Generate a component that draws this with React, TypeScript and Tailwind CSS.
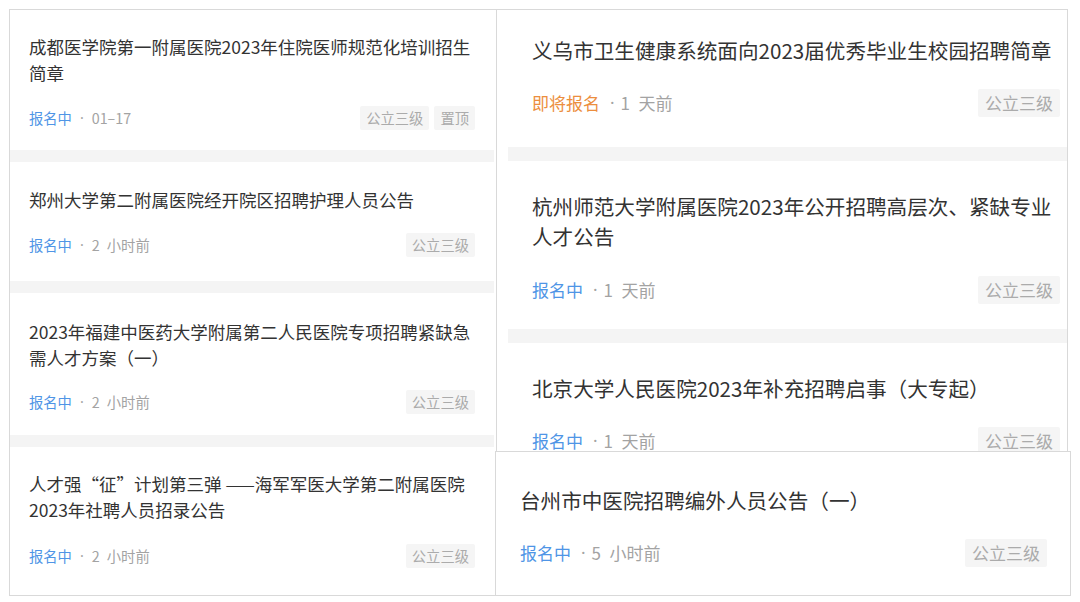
import React from "react";

type Size = "sm" | "lg";

interface CardProps {
  lines: string[];
  status: string;
  orange?: boolean;
  time: string;
  tags: string[];
  size: Size;
  pad: string;
  gap: string;
}

const FONT = { fontFamily: '"Noto Sans CJK SC", "Noto Sans", sans-serif' };

function Card({ lines, status, orange, time, tags, size, pad, gap }: CardProps) {
  const lg = size === "lg";
  return (
    <div className={pad}>
      <div className={lg ? "text-[20.6px] leading-[30px] text-[#333333]" : "text-[17.5px] leading-[26px] text-[#333333]"}>
        {lines.map((l, i) => (
          <div key={i} className="whitespace-nowrap">
            {l}
          </div>
        ))}
      </div>
      <div className={`${gap} flex items-center justify-between ${lg ? "h-[28px]" : "h-[24px]"}`}>
        <div className={`flex items-center whitespace-nowrap ${lg ? "text-[17px]" : "text-[14.3px]"}`}>
          <span className={orange ? "text-[#ec8e3e]" : "text-[#4f95e6]"}>{status}</span>
          <span
            className={
              lg
                ? "ml-[10px] mr-[6px] text-[#a3a3a3] font-['Noto_Sans']"
                : "ml-[8px] mr-[8px] text-[#a3a3a3] font-['Noto_Sans']"
            }
          >
            ·
          </span>
          <span className="text-[#a3a3a3]">{time.replace(" ", "\u2002")}</span>
        </div>
        <div className={`flex items-center ${lg ? "gap-[6px]" : "gap-[5px]"}`}>
          {tags.map((t) => (
            <span
              key={t}
              className={
                lg
                  ? "h-[28px] leading-[28px] px-[7px] text-[17px] bg-[#f5f5f5] text-[#ababab] rounded-[2px]"
                  : "h-[24px] leading-[24px] px-[6px] text-[14.3px] bg-[#f5f5f5] text-[#ababab] rounded-[2px]"
              }
            >
              {t}
            </span>
          ))}
        </div>
      </div>
    </div>
  );
}

function SepS() {
  return <div className="h-[12px] bg-[#f4f4f4] mr-[2px]" />;
}

function SepL() {
  return <div className="h-[14px] bg-[#f4f4f4] ml-[11px]" />;
}

export default function App() {
  return (
    <div className="w-[1080px] h-[602px] bg-white pt-[9px] pl-[9px] flex overflow-hidden" style={FONT}>
      {/* left screenshot */}
      <div className="w-[488px] h-[587px] border border-[#d9d9d9] bg-white flex flex-col overflow-hidden">
        <Card
          size="sm"
          pad="pt-[24px] pb-[20px] pl-[19px] pr-[21px]"
          gap="mt-[20px]"
          lines={["成都医学院第一附属医院2023年住院医师规范化培训招生", "简章"]}
          status="报名中"
          time="01–17"
          tags={["公立三级", "置顶"]}
        />
        <SepS />
        <Card
          size="sm"
          pad="pt-[25px] pb-[24px] pl-[19px] pr-[21px]"
          gap="mt-[20px]"
          lines={["郑州大学第二附属医院经开院区招聘护理人员公告"]}
          status="报名中"
          time="2 小时前"
          tags={["公立三级"]}
        />
        <SepS />
        <Card
          size="sm"
          pad="pt-[26px] pb-[21px] pl-[19px] pr-[21px]"
          gap="mt-[19px]"
          lines={["2023年福建中医药大学附属第二人民医院专项招聘紧缺急", "需人才方案（一）"]}
          status="报名中"
          time="2 小时前"
          tags={["公立三级"]}
        />
        <SepS />
        <Card
          size="sm"
          pad="pt-[24px] pb-[20px] pl-[19px] pr-[21px]"
          gap="mt-[21px]"
          lines={["人才强“征”计划第三弹 ——海军军医大学第二附属医院", "2023年社聘人员招录公告"]}
          status="报名中"
          time="2 小时前"
          tags={["公立三级"]}
        />
      </div>

      {/* right screenshots */}
      <div className="flex flex-col">
        <div className="w-[571px] h-[442px] border-t border-r border-[#d9d9d9] bg-white overflow-hidden">
          <Card
            size="lg"
            pad="pt-[25px] pb-[30px] pl-[35px] pr-[7px]"
            gap="mt-[24px]"
            lines={["义乌市卫生健康系统面向2023届优秀毕业生校园招聘简章"]}
            status="即将报名"
            orange
            time="1 天前"
            tags={["公立三级"]}
          />
          <SepL />
          <Card
            size="lg"
            pad="pt-[30px] pb-[25px] pl-[35px] pr-[7px]"
            gap="mt-[25px]"
            lines={["杭州师范大学附属医院2023年公开招聘高层次、紧缺专业", "人才公告"]}
            status="报名中"
            time="1 天前"
            tags={["公立三级"]}
          />
          <SepL />
          <Card
            size="lg"
            pad="pt-[30px] pb-[25px] pl-[35px] pr-[7px]"
            gap="mt-[24px]"
            lines={["北京大学人民医院2023年补充招聘启事（大专起）"]}
            status="报名中"
            time="1 天前"
            tags={["公立三级"]}
          />
        </div>
        <div className="ml-[-2px] w-[576px] h-[145px] border border-[#d9d9d9] bg-white overflow-hidden">
          <Card
            size="lg"
            pad="pt-[33px] pb-[20px] pl-[24px] pr-[23px]"
            gap="mt-[24px]"
            lines={["台州市中医院招聘编外人员公告（一）"]}
            status="报名中"
            time="5 小时前"
            tags={["公立三级"]}
          />
        </div>
      </div>
    </div>
  );
}
